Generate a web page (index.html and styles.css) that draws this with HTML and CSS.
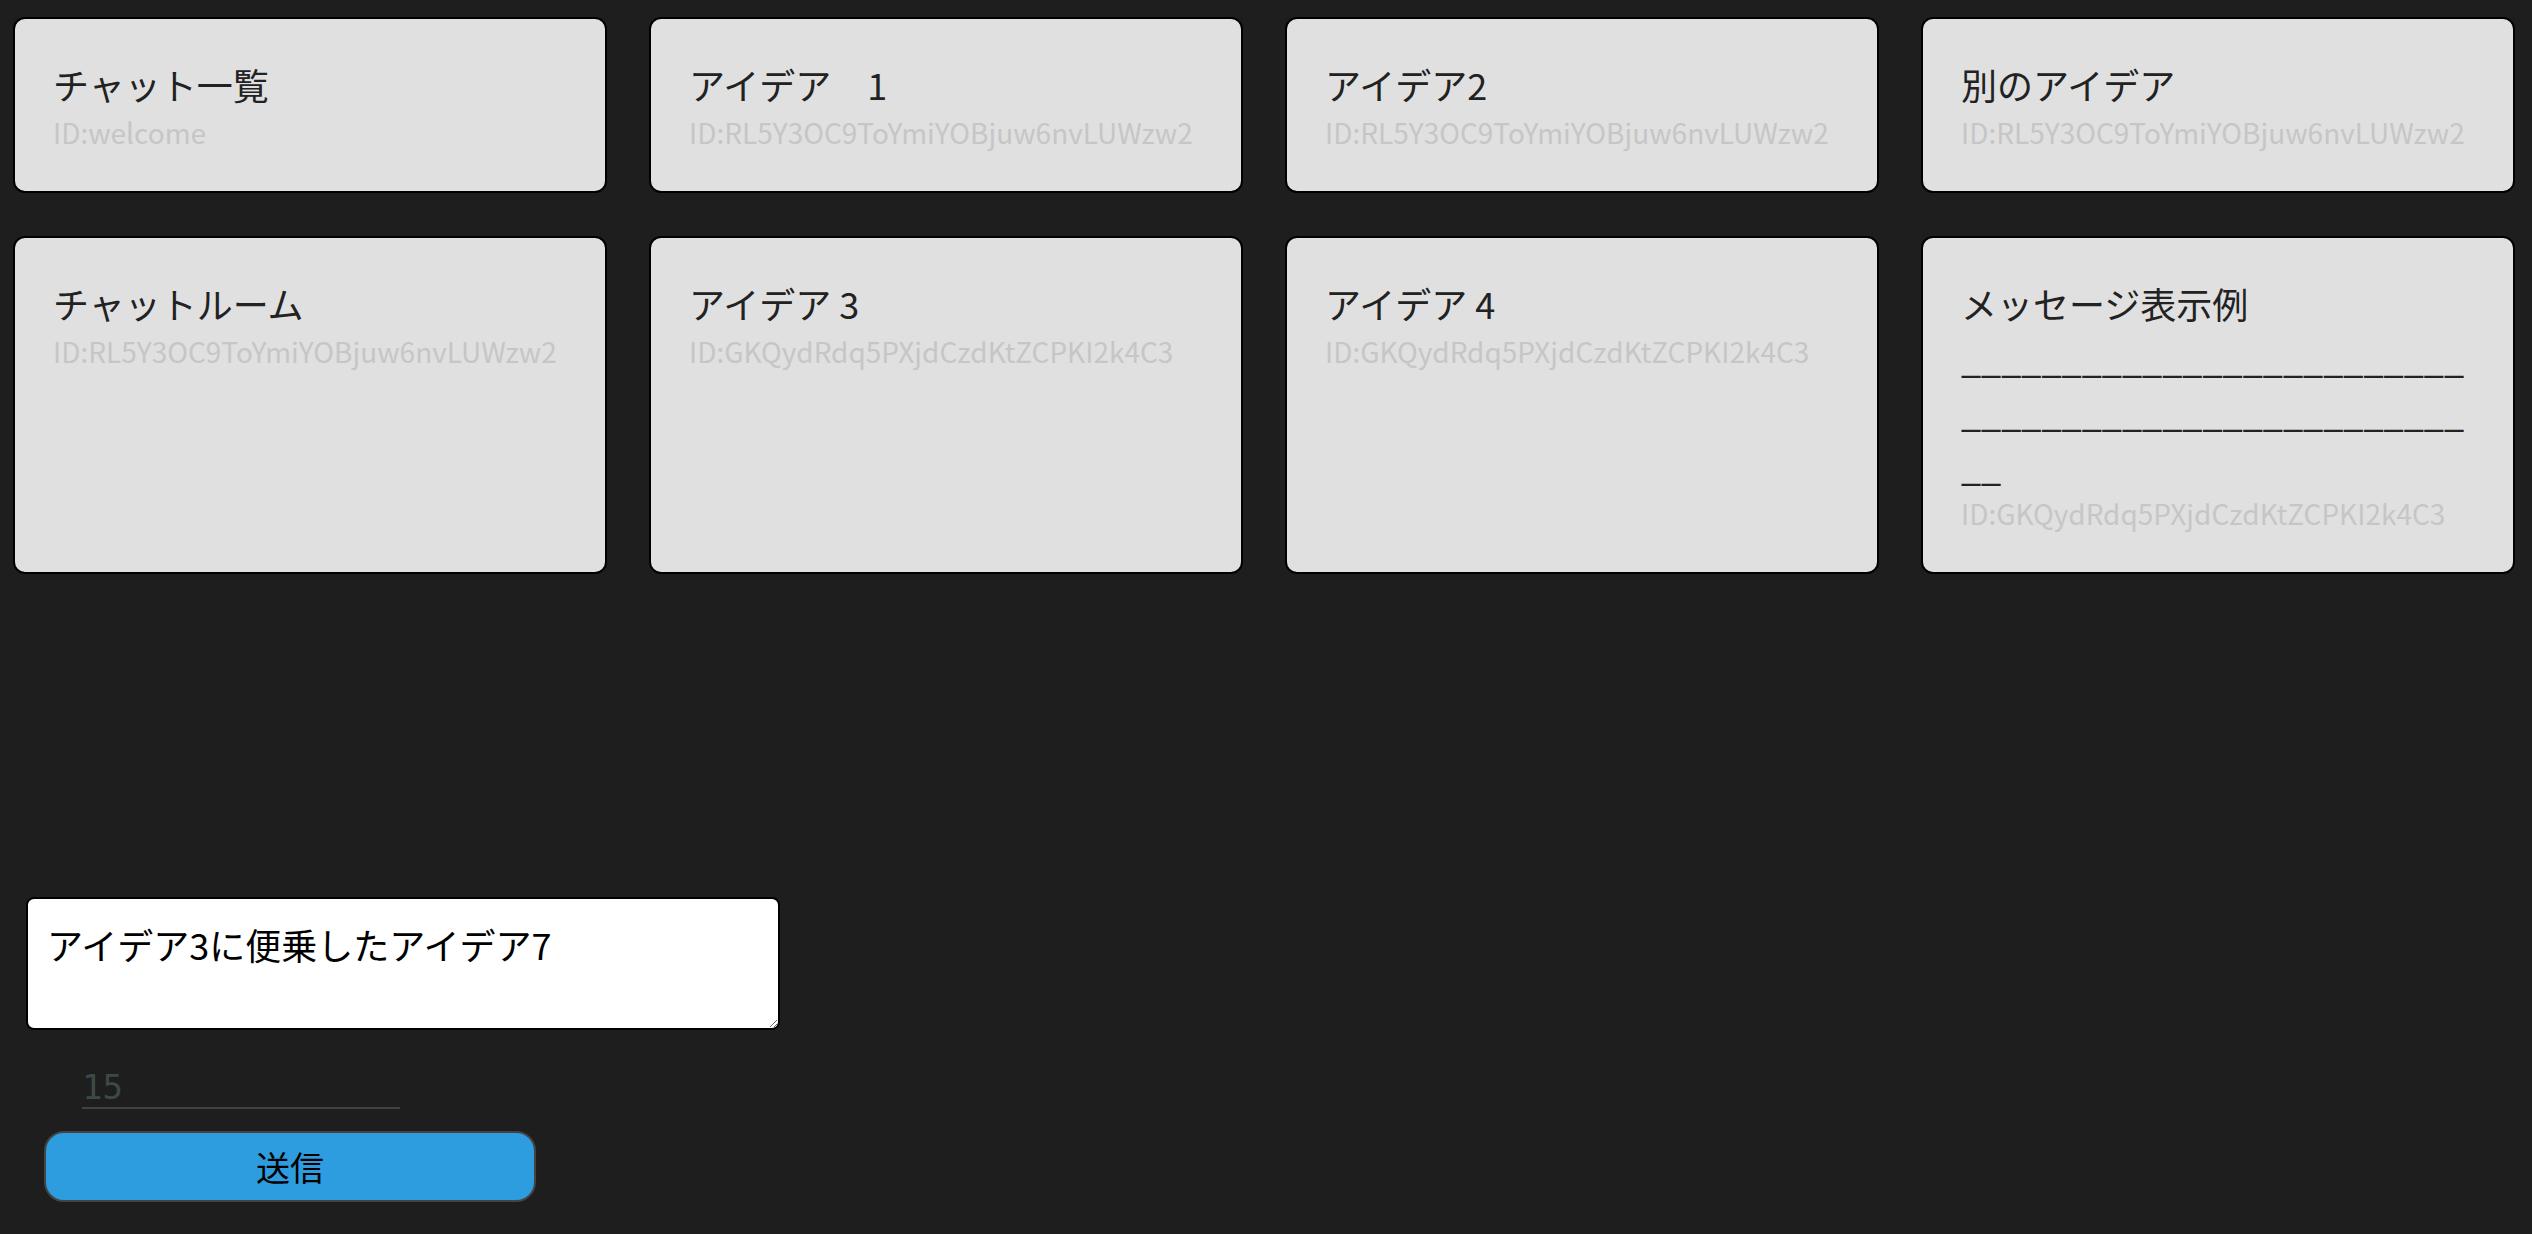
FILE: index.html
```html
<!DOCTYPE html>
<html lang="ja">
<head>
<meta charset="utf-8">
<title>チャット</title>
<link rel="stylesheet" href="styles.css">
</head>
<body>
<main class="page">
  <section class="cards">
    <article class="card"><h2 class="card-title">チャット一覧</h2><p class="card-id">ID:welcome</p></article>
    <article class="card"><h2 class="card-title">アイデア　1</h2><p class="card-id">ID:RL5Y3OC9ToYmiYOBjuw6nvLUWzw2</p></article>
    <article class="card"><h2 class="card-title">アイデア2</h2><p class="card-id">ID:RL5Y3OC9ToYmiYOBjuw6nvLUWzw2</p></article>
    <article class="card"><h2 class="card-title">別のアイデア</h2><p class="card-id">ID:RL5Y3OC9ToYmiYOBjuw6nvLUWzw2</p></article>
    <article class="card"><h2 class="card-title">チャットルーム</h2><p class="card-id">ID:RL5Y3OC9ToYmiYOBjuw6nvLUWzw2</p></article>
    <article class="card"><h2 class="card-title">アイデア 3</h2><p class="card-id">ID:GKQydRdq5PXjdCzdKtZCPKI2k4C3</p></article>
    <article class="card"><h2 class="card-title">アイデア 4</h2><p class="card-id">ID:GKQydRdq5PXjdCzdKtZCPKI2k4C3</p></article>
    <article class="card"><h2 class="card-title">メッセージ表示例<span class="under">____________________________________________________</span></h2><p class="card-id">ID:GKQydRdq5PXjdCzdKtZCPKI2k4C3</p></article>
  </section>
  <form class="composer">
    <textarea class="message">アイデア3に便乗したアイデア7</textarea>
    <input class="count" type="text" value="15">
    <button class="send" type="button">送信</button>
  </form>
</main>
</body>
</html>
```
FILE: styles.css
```css
html, body {
  margin: 0;
  padding: 0;
  background: #1e1e1e;
}

body {
  font-family: "Noto Sans CJK JP", "Noto Sans", sans-serif;
}

.page {
  display: flex;
  flex-direction: column;
}

.cards {
  display: grid;
  grid-template-columns: repeat(4, minmax(0, 1fr));
  column-gap: 42px;
  row-gap: 43px;
  padding: 17px 17px 0 13px;
}

.card {
  box-sizing: border-box;
  background: #e0e0e0;
  border: 2px solid #000;
  border-radius: 12px;
  padding: 38px;
}

.card-title {
  margin: 0;
  font-size: 36px;
  font-weight: 400;
  line-height: 54px;
  color: #222;
  overflow-wrap: break-word;
}

.under {
  letter-spacing: 0;
}

.card-id {
  margin: 0;
  font-size: 28px;
  line-height: 42px;
  color: #c6c6c6;
  white-space: nowrap;
}

.composer {
  display: flex;
  flex-direction: column;
  align-items: flex-start;
  margin-top: 323px;
  padding-left: 26px;
  padding-bottom: 32px;
}

.message {
  box-sizing: border-box;
  width: 754px;
  height: 133px;
  padding: 19px;
  border: 2px solid #000;
  border-radius: 8px;
  background: #fff;
  color: #000;
  font-family: "Noto Sans CJK JP", sans-serif;
  font-size: 36px;
  line-height: 52px;
  margin: 0;
}

.count {
  box-sizing: border-box;
  margin: 37px 0 0 56px;
  width: 318px;
  height: 42px;
  padding: 0;
  border: none;
  border-bottom: 2px solid #3c4440;
  background: transparent;
  color: #3c4a44;
  font-family: "DejaVu Sans Mono", monospace;
  font-size: 34px;
  outline: none;
}

.send {
  box-sizing: border-box;
  margin: 22px 0 0 18px;
  width: 492px;
  height: 71px;
  border: 2px solid #444;
  border-radius: 20px;
  background: #2d9de0;
  color: #000;
  font-family: "Noto Sans CJK JP", sans-serif;
  font-size: 34px;
  padding: 0;
}
```
